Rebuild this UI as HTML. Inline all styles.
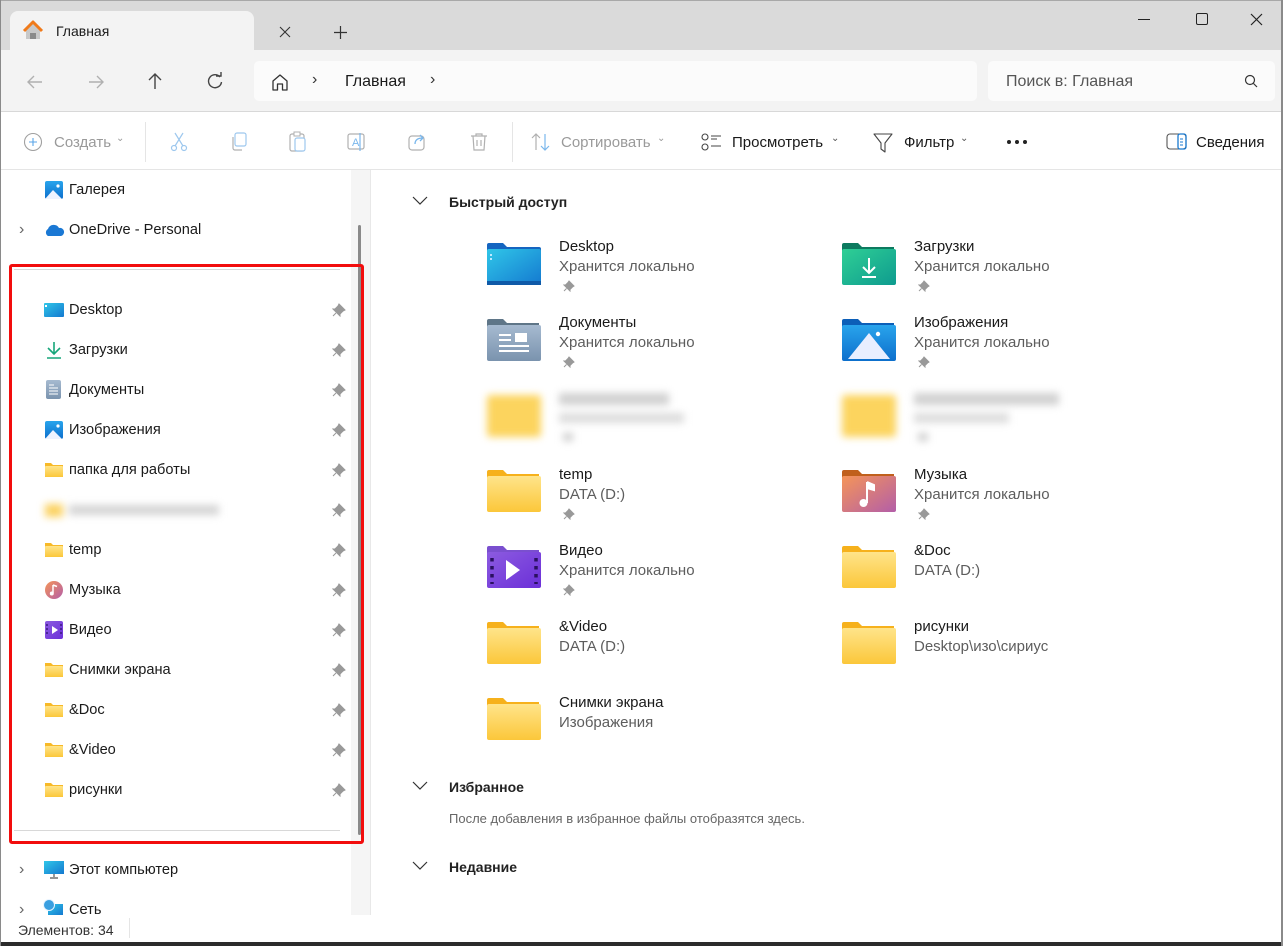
<!DOCTYPE html>
<html><head><meta charset="utf-8">
<style>
*{margin:0;padding:0;box-sizing:border-box}
body{width:1283px;height:946px;overflow:hidden;background:#fff;font-family:"Liberation Sans","Noto Sans CJK SC",sans-serif;color:#1a1a1a;position:relative}
.abs{position:absolute}
#title{left:0;top:0;width:1283px;height:50px;background:#dadada;border-top:1px solid #a8a8a8}
#tab{left:10px;top:11px;width:244px;height:40px;background:#f3f3f3;border-radius:8px 8px 0 0}
#addr{left:0;top:50px;width:1283px;height:62px;background:#f3f3f3;border-bottom:1px solid #d8d8d8}
.box{background:#fbfbfb;border-radius:5px}
#tool{left:0;top:112px;width:1283px;height:58px;background:#fff;border-bottom:1px solid #e5e5e5}
.t{position:absolute;font-size:15px;white-space:nowrap}
.g{color:#9a9a9a}
#side{left:0;top:170px;width:351px;height:745px;background:#fff}
#gut{left:351px;top:170px;width:20px;height:745px;background:#f5f5f5;border-right:1px solid #e8e8e8}
.si{position:absolute;left:69px;font-size:14.6px}
.pin{position:absolute;left:332px}
.ic{position:absolute}
.name{position:absolute;font-size:15px;color:#1a1a1a}
.sub{position:absolute;font-size:15px;color:#5d5d5d}
.blur{filter:blur(4px)}
</style></head><body>
<svg width="0" height="0" style="position:absolute">
<linearGradient id="fy" x1="0" y1="0" x2="0" y2="1"><stop offset="0" stop-color="#ffe48a"/><stop offset="1" stop-color="#fbc73a"/></linearGradient>
<linearGradient id="fb" x1="0" y1="0" x2="1" y2="1"><stop offset="0" stop-color="#30c6e8"/><stop offset="1" stop-color="#1479d0"/></linearGradient>
<linearGradient id="fg" x1="0" y1="0" x2="1" y2="1"><stop offset="0" stop-color="#2fcf95"/><stop offset="1" stop-color="#0e9b8f"/></linearGradient>
<linearGradient id="fd" x1="0" y1="0" x2="0" y2="1"><stop offset="0" stop-color="#a6bad0"/><stop offset="1" stop-color="#7a93ae"/></linearGradient>
<linearGradient id="fi" x1="0" y1="0" x2="0" y2="1"><stop offset="0" stop-color="#29a4ec"/><stop offset="1" stop-color="#0d6fcc"/></linearGradient>
<linearGradient id="fm" x1="0" y1="0" x2="1" y2="1"><stop offset="0" stop-color="#f59558"/><stop offset="1" stop-color="#b35ea8"/></linearGradient>
<linearGradient id="fv" x1="0" y1="0" x2="1" y2="1"><stop offset="0" stop-color="#8c5be0"/><stop offset="1" stop-color="#6b2fd8"/></linearGradient>
</svg>

<div id="title" class="abs"></div>
<div id="tab" class="abs"></div>
<svg class="abs" style="left:22px;top:20px" width="22" height="22" viewBox="0 0 22 22"><path d="M4 10 L11 3 L18 10 V19 H4 Z" fill="#c8c8c8"/><path d="M8 19 V13 H14 V19" fill="#8a8a8a"/><path d="M2 11 L11 2 L20 11" fill="none" stroke="#f07a1a" stroke-width="3" stroke-linejoin="round"/></svg>
<div class="t" style="left:56px;top:23px;font-size:14px">Главная</div>
<svg class="abs" style="left:279px;top:26px" width="12" height="12"><path d="M1 1 L11 11 M11 1 L1 11" stroke="#333" stroke-width="1.1"/></svg>
<svg class="abs" style="left:334px;top:26px" width="13" height="13"><path d="M6.5 0 V13 M0 6.5 H13" stroke="#333" stroke-width="1.2"/></svg>
<div class="abs" style="left:1138px;top:19px;width:12px;height:1px;background:#222"></div>
<div class="abs" style="left:1196px;top:13px;width:12px;height:12px;border:1.2px solid #222;border-radius:2px"></div>
<svg class="abs" style="left:1250px;top:13px" width="13" height="13"><path d="M1 1 L12 12 M12 1 L1 12" stroke="#222" stroke-width="1.2"/></svg>

<div id="addr" class="abs"></div>
<svg class="abs" style="left:25px;top:72px" width="20" height="20"><path d="M17 10 H3 M9 4 L3 10 L9 16" fill="none" stroke="#b0b0b0" stroke-width="1.4"/></svg>
<svg class="abs" style="left:86px;top:72px" width="20" height="20"><path d="M3 10 H17 M11 4 L17 10 L11 16" fill="none" stroke="#b0b0b0" stroke-width="1.4"/></svg>
<svg class="abs" style="left:145px;top:71px" width="20" height="20"><path d="M10 18 V3 M4 9 L10 3 L16 9" fill="none" stroke="#444" stroke-width="1.4"/></svg>
<svg class="abs" style="left:205px;top:71px" width="20" height="20"><path d="M15 6 A6.5 6.5 0 1 0 16.5 11" fill="none" stroke="#444" stroke-width="1.4"/><path d="M11 5 H16 V1" fill="none" stroke="#444" stroke-width="1.4"/></svg>
<div class="abs box" style="left:254px;top:61px;width:723px;height:40px"></div>
<svg class="abs" style="left:270px;top:72px" width="20" height="20"><path d="M3 9 L10 3 L17 9 V18 H12.5 V12 H7.5 V18 H3 Z" fill="none" stroke="#333" stroke-width="1.3" stroke-linejoin="round"/></svg>
<div class="t" style="left:312px;top:71px;font-size:16px;color:#333">›</div>
<div class="t" style="left:345px;top:73px;font-size:16px">Главная</div>
<div class="t" style="left:430px;top:71px;font-size:16px;color:#333">›</div>
<div class="abs box" style="left:988px;top:61px;width:287px;height:40px"></div>
<div class="t" style="left:1006px;top:73px;font-size:16px;color:#555">Поиск в: Главная</div>
<svg class="abs" style="left:1244px;top:74px" width="14" height="14"><circle cx="6" cy="6" r="4.5" fill="none" stroke="#333" stroke-width="1.2"/><path d="M9.5 9.5 L13 13" stroke="#333" stroke-width="1.2"/></svg>

<div id="tool" class="abs"></div>
<svg class="abs" style="left:23px;top:132px" width="20" height="20"><circle cx="10" cy="10" r="8.5" fill="none" stroke="#a0a0a0" stroke-width="1.1"/><path d="M10 6 V14 M6 10 H14" stroke="#5aa5e8" stroke-width="1.1"/></svg>
<div class="t g" style="left:54px;top:134px">Создать</div>
<div class="t g" style="left:116px;top:133px;font-size:10px">⌄</div>
<div class="abs" style="left:145px;top:122px;width:1px;height:40px;background:#e5e5e5"></div>
<svg class="abs" style="left:168px;top:131px" width="22" height="22"><path d="M7 2 L15 15 M15 2 L7 15" stroke="#9ec8ee" stroke-width="1.2"/><circle cx="6" cy="17" r="2.5" fill="none" stroke="#9ec8ee" stroke-width="1.2"/><circle cx="16" cy="17" r="2.5" fill="none" stroke="#9ec8ee" stroke-width="1.2"/></svg>
<svg class="abs" style="left:228px;top:131px" width="22" height="22"><rect x="7" y="2" width="11" height="13" rx="2" fill="none" stroke="#9ec8ee" stroke-width="1.2"/><path d="M5 6 V17 A2 2 0 0 0 7 19 H14" fill="none" stroke="#b0b0b0" stroke-width="1.2"/></svg>
<svg class="abs" style="left:287px;top:130px" width="22" height="24"><rect x="3" y="4" width="14" height="17" rx="2" fill="none" stroke="#b0b0b0" stroke-width="1.2"/><rect x="8" y="8" width="10" height="13" rx="2" fill="#fff" stroke="#9ec8ee" stroke-width="1.2"/><rect x="7" y="2" width="6" height="4" fill="#fff" stroke="#b0b0b0" stroke-width="1"/></svg>
<svg class="abs" style="left:346px;top:131px" width="22" height="22"><rect x="2" y="3" width="16" height="15" rx="2" fill="none" stroke="#b0b0b0" stroke-width="1.2"/><text x="6" y="15" font-size="11" fill="#7ab7ec" font-family="Liberation Sans">A</text><path d="M14 2 V20" stroke="#7ab7ec" stroke-width="1.2"/></svg>
<svg class="abs" style="left:407px;top:131px" width="22" height="22"><rect x="2" y="5" width="15" height="14" rx="3" fill="none" stroke="#b0b0b0" stroke-width="1.2"/><path d="M8 13 C8 8 12 7 16 7 M13 4 L16 7 L13 10" fill="none" stroke="#7ab7ec" stroke-width="1.3"/></svg>
<svg class="abs" style="left:468px;top:131px" width="22" height="22"><path d="M3 5 H19 M8 5 V3 H14 V5 M5 5 L6 19 H16 L17 5 M9 9 V15 M13 9 V15" fill="none" stroke="#b0b0b0" stroke-width="1.2"/></svg>
<div class="abs" style="left:512px;top:122px;width:1px;height:40px;background:#e5e5e5"></div>
<svg class="abs" style="left:530px;top:131px" width="22" height="22"><path d="M6 19 V3 M2 7 L6 3 L10 7" fill="none" stroke="#b0b0b0" stroke-width="1.2"/><path d="M15 3 V19 M11 15 L15 19 L19 15" fill="none" stroke="#7ab7ec" stroke-width="1.2"/></svg>
<div class="t g" style="left:561px;top:134px">Сортировать</div>
<div class="t g" style="left:657px;top:133px;font-size:10px">⌄</div>
<svg class="abs" style="left:700px;top:132px" width="22" height="20"><circle cx="5" cy="5" r="3" fill="none" stroke="#444" stroke-width="1.1"/><circle cx="5" cy="15" r="3" fill="none" stroke="#444" stroke-width="1.1"/><path d="M11 4 H21 M11 7 H17 M11 14 H21" stroke="#444" stroke-width="1.1"/></svg>
<div class="t" style="left:732px;top:134px">Просмотреть</div>
<div class="t" style="left:831px;top:133px;font-size:10px;color:#555">⌄</div>
<svg class="abs" style="left:872px;top:132px" width="22" height="22"><path d="M2 2 H20 L13 11 V20 L9 17 V11 Z" fill="none" stroke="#444" stroke-width="1.1" stroke-linejoin="round"/></svg>
<div class="t" style="left:904px;top:134px">Фильтр</div>
<div class="t" style="left:960px;top:133px;font-size:10px;color:#555">⌄</div>
<svg class="abs" style="left:1006px;top:139px" width="22" height="6"><circle cx="3" cy="3" r="2" fill="#222"/><circle cx="11" cy="3" r="2" fill="#222"/><circle cx="19" cy="3" r="2" fill="#222"/></svg>
<svg class="abs" style="left:1166px;top:133px" width="22" height="18"><rect x="1" y="1" width="19" height="15" rx="3" fill="none" stroke="#555" stroke-width="1.1"/><rect x="12" y="1" width="8" height="15" rx="2" fill="none" stroke="#1a7ad0" stroke-width="1.3"/><path d="M14 6 H17 M14 9 H17 M14 12 H17" stroke="#1a7ad0" stroke-width="1"/></svg>
<div class="t" style="left:1196px;top:134px">Сведения</div>

<div id="side" class="abs"></div>
<div id="gut" class="abs"></div>
<div class="abs" style="left:358px;top:225px;width:3px;height:610px;background:#8a8a8a;border-radius:2px"></div>

<svg class="ic" style="left:44px;top:180px" width="20" height="20"><rect x="1" y="1" width="18" height="18" rx="2" fill="url(#fi)"/><path d="M1 19 L9 10 L18 19 Z" fill="#eef3ff"/><circle cx="14" cy="6" r="1.6" fill="#fff"/></svg>
<div class="si" style="top:182px">Галерея</div>
<div class="t" style="left:19px;top:221px;color:#666;font-size:16px">›</div>
<svg class="ic" style="left:43px;top:222px" width="22" height="16"><path d="M5 14 A4 4 0 0 1 5 7 A6 6 0 0 1 16 6 A4 4 0 0 1 18 14 Z" fill="#1a78d4"/></svg>
<div class="si" style="top:222px">OneDrive - Personal</div>
<div class="abs" style="left:14px;top:269px;width:326px;height:1px;background:#d8d8d8"></div>

<svg class="ic" style="left:44px;top:302px" width="20" height="16"><rect x="0" y="1" width="20" height="14" rx="1" fill="url(#fb)"/><rect x="1" y="3" width="2" height="2" fill="#fff"/></svg>
<div class="si" style="top:302px">Desktop</div>
<svg class="ic" style="left:45px;top:341px" width="18" height="18"><path d="M9 1 V13 M3 7 L9 13 L15 7 M2 17 H16" fill="none" stroke="#17a67a" stroke-width="1.6"/></svg>
<div class="si" style="top:342px">Загрузки</div>
<svg class="ic" style="left:46px;top:380px" width="16" height="20"><rect x="0" y="0" width="15" height="19" rx="2" fill="url(#fd)"/><path d="M3 5 H8 M3 8 H12 M3 11 H12 M3 14 H12" stroke="#fff" stroke-width="1"/></svg>
<div class="si" style="top:382px">Документы</div>
<svg class="ic" style="left:44px;top:420px" width="20" height="20"><rect x="1" y="1" width="18" height="18" rx="2" fill="url(#fi)"/><path d="M1 19 L9 10 L18 19 Z" fill="#eef3ff"/><circle cx="14" cy="6" r="1.6" fill="#fff"/></svg>
<div class="si" style="top:422px">Изображения</div>
<svg class="ic" style="left:45px;top:462px" width="18" height="16"><path d="M0 1 H6 L8 3 H18 V15 H0 Z" fill="#f7b928"/><rect x="0" y="4" width="18" height="11" rx="1" fill="url(#fy)"/></svg>
<div class="si" style="top:462px">папка для работы</div>
<div class="blur"><svg class="ic" style="left:45px;top:502px" width="18" height="16"><rect x="0" y="2" width="18" height="13" fill="#fbd262"/></svg><div class="abs" style="left:69px;top:505px;width:150px;height:10px;background:#d4d4d4"></div></div>
<svg class="ic" style="left:45px;top:542px" width="18" height="16"><path d="M0 1 H6 L8 3 H18 V15 H0 Z" fill="#f7b928"/><rect x="0" y="4" width="18" height="11" rx="1" fill="url(#fy)"/></svg>
<div class="si" style="top:542px">temp</div>
<svg class="ic" style="left:45px;top:581px" width="18" height="18"><circle cx="9" cy="9" r="9" fill="url(#fm)"/><path d="M8 4 V12 M8 4 L12 5.5" stroke="#fff" stroke-width="1.5"/><circle cx="6.8" cy="12.5" r="2" fill="#fff"/></svg>
<div class="si" style="top:582px">Музыка</div>
<svg class="ic" style="left:45px;top:621px" width="18" height="18"><rect x="0" y="0" width="18" height="18" rx="2" fill="url(#fv)"/><path d="M7 5 L13 9 L7 13 Z" fill="#fff"/><path d="M2 3 V15 M16 3 V15" stroke="#3a1a80" stroke-width="1.5" stroke-dasharray="2 2"/></svg>
<div class="si" style="top:622px">Видео</div>
<svg class="ic" style="left:45px;top:662px" width="18" height="16"><path d="M0 1 H6 L8 3 H18 V15 H0 Z" fill="#f7b928"/><rect x="0" y="4" width="18" height="11" rx="1" fill="url(#fy)"/></svg>
<div class="si" style="top:662px">Снимки экрана</div>
<svg class="ic" style="left:45px;top:702px" width="18" height="16"><path d="M0 1 H6 L8 3 H18 V15 H0 Z" fill="#f7b928"/><rect x="0" y="4" width="18" height="11" rx="1" fill="url(#fy)"/></svg>
<div class="si" style="top:702px">&amp;Doc</div>
<svg class="ic" style="left:45px;top:742px" width="18" height="16"><path d="M0 1 H6 L8 3 H18 V15 H0 Z" fill="#f7b928"/><rect x="0" y="4" width="18" height="11" rx="1" fill="url(#fy)"/></svg>
<div class="si" style="top:742px">&amp;Video</div>
<svg class="ic" style="left:45px;top:782px" width="18" height="16"><path d="M0 1 H6 L8 3 H18 V15 H0 Z" fill="#f7b928"/><rect x="0" y="4" width="18" height="11" rx="1" fill="url(#fy)"/></svg>
<div class="si" style="top:782px">рисунки</div>

<svg class="pin" style="top:303px" width="14" height="14"><path d="M7 1 L13 7 L11 8 L8 11 L8 13 L1 6 L3 6 L6 3 Z M4 10 L1 13" fill="#999" stroke="#999" stroke-width="1"/></svg>
<svg class="pin" style="top:343px" width="14" height="14"><path d="M7 1 L13 7 L11 8 L8 11 L8 13 L1 6 L3 6 L6 3 Z M4 10 L1 13" fill="#999" stroke="#999" stroke-width="1"/></svg>
<svg class="pin" style="top:383px" width="14" height="14"><path d="M7 1 L13 7 L11 8 L8 11 L8 13 L1 6 L3 6 L6 3 Z M4 10 L1 13" fill="#999" stroke="#999" stroke-width="1"/></svg>
<svg class="pin" style="top:423px" width="14" height="14"><path d="M7 1 L13 7 L11 8 L8 11 L8 13 L1 6 L3 6 L6 3 Z M4 10 L1 13" fill="#999" stroke="#999" stroke-width="1"/></svg>
<svg class="pin" style="top:463px" width="14" height="14"><path d="M7 1 L13 7 L11 8 L8 11 L8 13 L1 6 L3 6 L6 3 Z M4 10 L1 13" fill="#999" stroke="#999" stroke-width="1"/></svg>
<svg class="pin" style="top:503px" width="14" height="14"><path d="M7 1 L13 7 L11 8 L8 11 L8 13 L1 6 L3 6 L6 3 Z M4 10 L1 13" fill="#999" stroke="#999" stroke-width="1"/></svg>
<svg class="pin" style="top:543px" width="14" height="14"><path d="M7 1 L13 7 L11 8 L8 11 L8 13 L1 6 L3 6 L6 3 Z M4 10 L1 13" fill="#999" stroke="#999" stroke-width="1"/></svg>
<svg class="pin" style="top:583px" width="14" height="14"><path d="M7 1 L13 7 L11 8 L8 11 L8 13 L1 6 L3 6 L6 3 Z M4 10 L1 13" fill="#999" stroke="#999" stroke-width="1"/></svg>
<svg class="pin" style="top:623px" width="14" height="14"><path d="M7 1 L13 7 L11 8 L8 11 L8 13 L1 6 L3 6 L6 3 Z M4 10 L1 13" fill="#999" stroke="#999" stroke-width="1"/></svg>
<svg class="pin" style="top:663px" width="14" height="14"><path d="M7 1 L13 7 L11 8 L8 11 L8 13 L1 6 L3 6 L6 3 Z M4 10 L1 13" fill="#999" stroke="#999" stroke-width="1"/></svg>
<svg class="pin" style="top:703px" width="14" height="14"><path d="M7 1 L13 7 L11 8 L8 11 L8 13 L1 6 L3 6 L6 3 Z M4 10 L1 13" fill="#999" stroke="#999" stroke-width="1"/></svg>
<svg class="pin" style="top:743px" width="14" height="14"><path d="M7 1 L13 7 L11 8 L8 11 L8 13 L1 6 L3 6 L6 3 Z M4 10 L1 13" fill="#999" stroke="#999" stroke-width="1"/></svg>
<svg class="pin" style="top:783px" width="14" height="14"><path d="M7 1 L13 7 L11 8 L8 11 L8 13 L1 6 L3 6 L6 3 Z M4 10 L1 13" fill="#999" stroke="#999" stroke-width="1"/></svg>

<div class="abs" style="left:14px;top:830px;width:326px;height:1px;background:#d8d8d8"></div>
<div class="abs" style="left:9px;top:264px;width:355px;height:580px;border:3px solid #f20d0d;border-radius:3px"></div>

<div class="t" style="left:19px;top:861px;color:#666;font-size:16px">›</div>
<svg class="ic" style="left:44px;top:861px" width="20" height="18"><rect x="0" y="0" width="20" height="13" fill="url(#fb)"/><path d="M10 13 V16 M6 17 H14" stroke="#555" stroke-width="1.2"/></svg>
<div class="si" style="top:862px">Этот компьютер</div>
<div class="t" style="left:19px;top:901px;color:#666;font-size:16px">›</div>
<svg class="ic" style="left:42px;top:899px" width="22" height="16"><rect x="6" y="5" width="15" height="11" fill="url(#fb)"/><circle cx="7" cy="6" r="5.5" fill="#3a9fe0" stroke="#e8f4ff" stroke-width="1"/></svg>
<div class="si" style="top:902px;height:13px;overflow:hidden">Сеть</div>

<div class="abs" style="left:0;top:915px;width:1283px;height:27px;background:#fff"></div>
<div class="t" style="left:18px;top:922px;font-size:14px;color:#333">Элементов: 34</div>
<div class="abs" style="left:129px;top:918px;width:1px;height:20px;background:#e5e5e5"></div>
<div class="abs" style="left:0;top:942px;width:1283px;height:4px;background:#2b2b2b"></div>
<div class="abs" style="left:0;top:0;width:1px;height:946px;background:#8a8a8a"></div>
<div class="abs" style="left:1281px;top:0;width:2px;height:946px;background:#8a8a8a"></div>

<svg class="abs" style="left:412px;top:196px" width="16" height="10"><path d="M1 1 L8 8 L15 1" fill="none" stroke="#333" stroke-width="1.2"/></svg>
<div class="t" style="left:449px;top:194px;font-size:14px;font-weight:bold;color:#222">Быстрый доступ</div>

<svg class="ic" style="left:487px;top:243px" width="54" height="42"><path d="M2 0 H16 L20 4 H52 A2 2 0 0 1 54 6 V40 A2 2 0 0 1 52 42 H2 A2 2 0 0 1 0 40 V2 A2 2 0 0 1 2 0Z" fill="#1565c0"/><rect x="0" y="6" width="54" height="36" rx="2" fill="url(#fb)"/><rect x="0" y="38" width="54" height="4" fill="#0f5aa8"/><rect x="3" y="11" width="2" height="2" fill="#bfe9ff"/><rect x="3" y="15" width="2" height="2" fill="#bfe9ff"/></svg>
<div class="name" style="left:559px;top:238px">Desktop</div><div class="sub" style="left:559px;top:258px">Хранится локально</div>
<svg class="pin" style="left:563px;top:280px" width="12" height="12"><path d="M6 1 L11 6 L9.5 7 L7 9.5 L7 11 L1 5 L2.5 5 L5 2.5 Z M3.5 8.5 L1 11" fill="#999" stroke="#999"/></svg>
<svg class="ic" style="left:842px;top:243px" width="54" height="42"><path d="M2 0 H16 L20 4 H52 V20 H0 V2 A2 2 0 0 1 2 0Z" fill="#0d7a5f"/><rect x="0" y="6" width="54" height="36" rx="2" fill="url(#fg)"/><path d="M27 15 V30 M21 24 L27 30 L33 24 M20 34 H34" fill="none" stroke="#fff" stroke-width="2"/></svg>
<div class="name" style="left:914px;top:238px">Загрузки</div><div class="sub" style="left:914px;top:258px">Хранится локально</div>
<svg class="pin" style="left:918px;top:280px" width="12" height="12"><path d="M6 1 L11 6 L9.5 7 L7 9.5 L7 11 L1 5 L2.5 5 L5 2.5 Z M3.5 8.5 L1 11" fill="#999" stroke="#999"/></svg>
<svg class="ic" style="left:487px;top:319px" width="54" height="42"><path d="M2 0 H16 L20 4 H52 V20 H0 V2 A2 2 0 0 1 2 0Z" fill="#5f7688"/><rect x="0" y="6" width="54" height="36" rx="2" fill="url(#fd)"/><path d="M12 16 H24 M12 21 H24 M12 27 H42 M12 32 H42" stroke="#fff" stroke-width="2"/><rect x="28" y="14" width="12" height="9" fill="#fff"/></svg>
<div class="name" style="left:559px;top:314px">Документы</div><div class="sub" style="left:559px;top:334px">Хранится локально</div>
<svg class="pin" style="left:563px;top:356px" width="12" height="12"><path d="M6 1 L11 6 L9.5 7 L7 9.5 L7 11 L1 5 L2.5 5 L5 2.5 Z M3.5 8.5 L1 11" fill="#999" stroke="#999"/></svg>
<svg class="ic" style="left:842px;top:319px" width="54" height="42"><path d="M2 0 H16 L20 4 H52 V20 H0 V2 A2 2 0 0 1 2 0Z" fill="#0c5fb8"/><rect x="0" y="6" width="54" height="36" rx="2" fill="url(#fi)"/><path d="M6 40 L27 14 L48 40 Z" fill="#e8eeff"/><circle cx="36" cy="15" r="2.2" fill="#fff"/></svg>
<div class="name" style="left:914px;top:314px">Изображения</div><div class="sub" style="left:914px;top:334px">Хранится локально</div>
<svg class="pin" style="left:918px;top:356px" width="12" height="12"><path d="M6 1 L11 6 L9.5 7 L7 9.5 L7 11 L1 5 L2.5 5 L5 2.5 Z M3.5 8.5 L1 11" fill="#999" stroke="#999"/></svg>
<div class="blur">
<svg class="ic" style="left:487px;top:393px" width="54" height="46"><rect x="0" y="2" width="54" height="42" rx="3" fill="#fcd45e"/></svg>
<div class="abs" style="left:559px;top:393px;width:110px;height:12px;background:#d0d0d0"></div>
<div class="abs" style="left:559px;top:413px;width:125px;height:10px;background:#dcdcdc"></div>
<div class="abs" style="left:563px;top:433px;width:10px;height:8px;background:#ccc"></div>
<svg class="ic" style="left:842px;top:393px" width="54" height="46"><rect x="0" y="2" width="54" height="42" rx="3" fill="#fcd45e"/></svg>
<div class="abs" style="left:914px;top:393px;width:145px;height:12px;background:#d0d0d0"></div>
<div class="abs" style="left:914px;top:413px;width:95px;height:10px;background:#dcdcdc"></div>
<div class="abs" style="left:918px;top:433px;width:10px;height:8px;background:#ccc"></div>
</div>
<svg class="ic" style="left:487px;top:470px" width="54" height="42"><path d="M2 0 H16 L20 4 H52 V20 H0 V2 A2 2 0 0 1 2 0Z" fill="#f6b11c"/><rect x="0" y="6" width="54" height="36" rx="2" fill="url(#fy)"/></svg>
<div class="name" style="left:559px;top:466px">temp</div><div class="sub" style="left:559px;top:486px">DATA (D:)</div>
<svg class="pin" style="left:563px;top:508px" width="12" height="12"><path d="M6 1 L11 6 L9.5 7 L7 9.5 L7 11 L1 5 L2.5 5 L5 2.5 Z M3.5 8.5 L1 11" fill="#999" stroke="#999"/></svg>
<svg class="ic" style="left:842px;top:470px" width="54" height="42"><path d="M2 0 H16 L20 4 H52 V20 H0 V2 A2 2 0 0 1 2 0Z" fill="#c0601c"/><rect x="0" y="6" width="54" height="36" rx="2" fill="url(#fm)"/><path d="M25 12 V33 M25 12 L32 15 V20 L25 18" fill="#fff" stroke="#fff" stroke-width="2"/><circle cx="21.5" cy="33" r="4" fill="#fff"/></svg>
<div class="name" style="left:914px;top:466px">Музыка</div><div class="sub" style="left:914px;top:486px">Хранится локально</div>
<svg class="pin" style="left:918px;top:508px" width="12" height="12"><path d="M6 1 L11 6 L9.5 7 L7 9.5 L7 11 L1 5 L2.5 5 L5 2.5 Z M3.5 8.5 L1 11" fill="#999" stroke="#999"/></svg>
<svg class="ic" style="left:487px;top:546px" width="54" height="42"><path d="M2 0 H16 L20 4 H52 V20 H0 V2 A2 2 0 0 1 2 0Z" fill="#7a4fcf"/><rect x="0" y="6" width="54" height="36" rx="2" fill="url(#fv)"/><path d="M19 14 L33 24 L19 34 Z" fill="#fff"/><path d="M5 12 V38 M49 12 V38" stroke="#2a1060" stroke-width="3.5" stroke-dasharray="3.5 4.5"/></svg>
<div class="name" style="left:559px;top:542px">Видео</div><div class="sub" style="left:559px;top:562px">Хранится локально</div>
<svg class="pin" style="left:563px;top:584px" width="12" height="12"><path d="M6 1 L11 6 L9.5 7 L7 9.5 L7 11 L1 5 L2.5 5 L5 2.5 Z M3.5 8.5 L1 11" fill="#999" stroke="#999"/></svg>
<svg class="ic" style="left:842px;top:546px" width="54" height="42"><path d="M2 0 H16 L20 4 H52 V20 H0 V2 A2 2 0 0 1 2 0Z" fill="#f6b11c"/><rect x="0" y="6" width="54" height="36" rx="2" fill="url(#fy)"/></svg>
<div class="name" style="left:914px;top:542px">&amp;Doc</div><div class="sub" style="left:914px;top:562px">DATA (D:)</div>
<svg class="ic" style="left:487px;top:622px" width="54" height="42"><path d="M2 0 H16 L20 4 H52 V20 H0 V2 A2 2 0 0 1 2 0Z" fill="#f6b11c"/><rect x="0" y="6" width="54" height="36" rx="2" fill="url(#fy)"/></svg>
<div class="name" style="left:559px;top:618px">&amp;Video</div><div class="sub" style="left:559px;top:638px">DATA (D:)</div>
<svg class="ic" style="left:842px;top:622px" width="54" height="42"><path d="M2 0 H16 L20 4 H52 V20 H0 V2 A2 2 0 0 1 2 0Z" fill="#f6b11c"/><rect x="0" y="6" width="54" height="36" rx="2" fill="url(#fy)"/></svg>
<div class="name" style="left:914px;top:618px">рисунки</div><div class="sub" style="left:914px;top:638px">Desktop\изо\сириус</div>
<svg class="ic" style="left:487px;top:698px" width="54" height="42"><path d="M2 0 H16 L20 4 H52 V20 H0 V2 A2 2 0 0 1 2 0Z" fill="#f6b11c"/><rect x="0" y="6" width="54" height="36" rx="2" fill="url(#fy)"/></svg>
<div class="name" style="left:559px;top:694px">Снимки экрана</div><div class="sub" style="left:559px;top:714px">Изображения</div>

<svg class="abs" style="left:412px;top:781px" width="16" height="10"><path d="M1 1 L8 8 L15 1" fill="none" stroke="#333" stroke-width="1.2"/></svg>
<div class="t" style="left:449px;top:779px;font-size:14px;font-weight:bold;color:#222">Избранное</div>
<div class="t" style="left:449px;top:811px;font-size:13px;color:#666">После добавления в избранное файлы отобразятся здесь.</div>
<svg class="abs" style="left:412px;top:861px" width="16" height="10"><path d="M1 1 L8 8 L15 1" fill="none" stroke="#333" stroke-width="1.2"/></svg>
<div class="t" style="left:449px;top:859px;font-size:14px;font-weight:bold;color:#222">Недавние</div>
</body></html>
